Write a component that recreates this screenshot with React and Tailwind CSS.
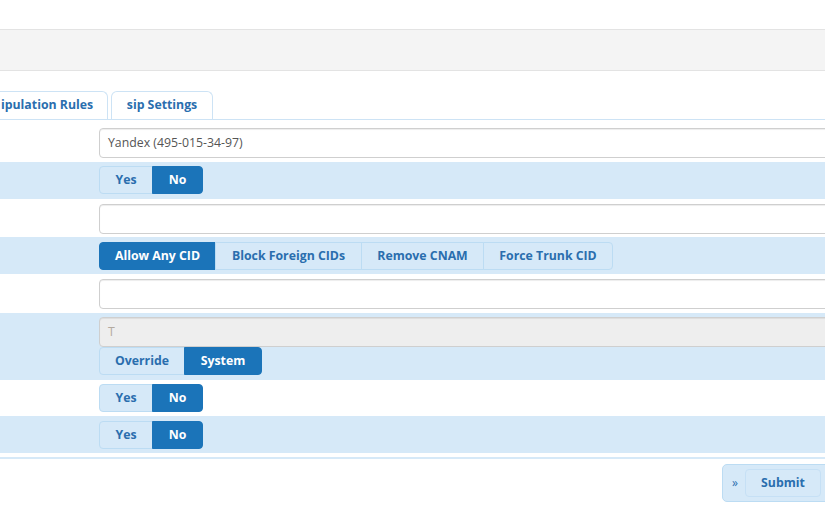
import React from 'react';

const font = { fontFamily: '"Open Sans", "Liberation Sans", sans-serif' };

function Toggle({ options, active }) {
  return (
    <div className="flex h-[28px] rounded-[4px] text-[12.3px] font-bold">
      {options.map((opt, i) => {
        const on = opt.label === active;
        const first = i === 0;
        const last = i === options.length - 1;
        return (
          <div
            key={opt.label}
            className={`flex items-center justify-center border ${first ? 'rounded-l-[4px]' : ''} ${last ? 'rounded-r-[4px]' : ''} ${
              on
                ? 'bg-[#1b74b9] border-[#1b74b9] text-white'
                : 'bg-[#d6e9f8] border-[#bcdcf3] text-[#2a6eae]'
            } ${!first ? '-ml-px' : ''}`}
            style={{ width: opt.w }}
          >
            {opt.label}
          </div>
        );
      })}
    </div>
  );
}

function TextInput({ value, disabled, placeholder }) {
  return (
    <div
      className={`h-[30px] w-[760px] rounded-[4px] border border-[#cfcfcf] flex items-center px-[8px] text-[12.3px] shadow-[inset_0_1px_1px_rgba(0,0,0,0.075)] ${
        disabled ? 'bg-[#eeeeee] text-[#b3aaa0]' : 'bg-white text-[#555]'
      }`}
    >
      {value || placeholder}
    </div>
  );
}

const yesNo = [
  { label: 'Yes', w: 54 },
  { label: 'No', w: 51 },
];

export default function App() {
  return (
    <div className="w-[825px] h-[510px] overflow-hidden bg-white" style={font}>
      <div className="h-[29px]" />
      <div className="h-[42px] bg-[#f4f4f4] border-y border-[#e3e3e3]" />

      {/* tabs */}
      <div className="h-[20px]" />
      <div className="flex items-end h-[29px] border-b border-[#cde3f5]">
        <div className="h-[28px] w-[108px] rounded-tr-[6px] border border-l-0 border-b-0 border-[#cde3f5] flex items-center pl-[1px] text-[12.3px] font-bold text-[#2a6eae] whitespace-nowrap">
          ipulation Rules
        </div>
        <div className="ml-[3px] h-[28px] w-[102px] rounded-t-[6px] border border-b-0 border-[#cde3f5] flex items-center justify-center text-[12.3px] font-bold text-[#2a6eae]">
          sip Settings
        </div>
      </div>

      {/* rows */}
      <div className="h-[42px] pl-[99px] pt-[8px]">
        <TextInput value="Yandex (495-015-34-97)" />
      </div>
      <div className="h-[37px] pl-[99px] pt-[4px] bg-[#d6e9f8]">
        <Toggle options={yesNo} active="No" />
      </div>
      <div className="h-[38px] pl-[99px] pt-[5px]">
        <TextInput />
      </div>
      <div className="h-[37px] pl-[99px] pt-[5px] bg-[#d6e9f8]">
        <Toggle
          options={[
            { label: 'Allow Any CID', w: 117 },
            { label: 'Block Foreign CIDs', w: 147 },
            { label: 'Remove CNAM', w: 123 },
            { label: 'Force Trunk CID', w: 130 },
          ]}
          active="Allow Any CID"
        />
      </div>
      <div className="h-[39px] pl-[99px] pt-[5px]">
        <TextInput />
      </div>
      <div className="h-[67px] pl-[99px] pt-[4px] bg-[#d6e9f8]">
        <TextInput disabled placeholder="T" />
        <Toggle
          options={[
            { label: 'Override', w: 86 },
            { label: 'System', w: 78 },
          ]}
          active="System"
        />
      </div>
      <div className="h-[36px] pl-[99px] pt-[4px]">
        <Toggle options={yesNo} active="No" />
      </div>
      <div className="h-[37px] pl-[99px] pt-[5px] bg-[#d6e9f8]">
        <Toggle options={yesNo} active="No" />
      </div>

      <div className="h-[4px]" />
      <div className="h-[2px] bg-[#d6e9f8]" />

      {/* footer */}
      <div className="flex justify-end pt-[5px]">
        <div className="mr-[-10px] h-[38px] w-[113px] rounded-[5px] border border-[#bcdcf3] bg-[#d6e9f8] flex items-center pl-[9px]">
          <span className="text-[12px] text-[#2a6eae] w-[10px]">»</span>
          <div className="ml-[3px] h-[28px] w-[76px] rounded-[4px] border border-[#c6e0f5] flex items-center justify-center text-[12.3px] font-bold text-[#2a6eae]">
            Submit
          </div>
        </div>
      </div>
    </div>
  );
}
